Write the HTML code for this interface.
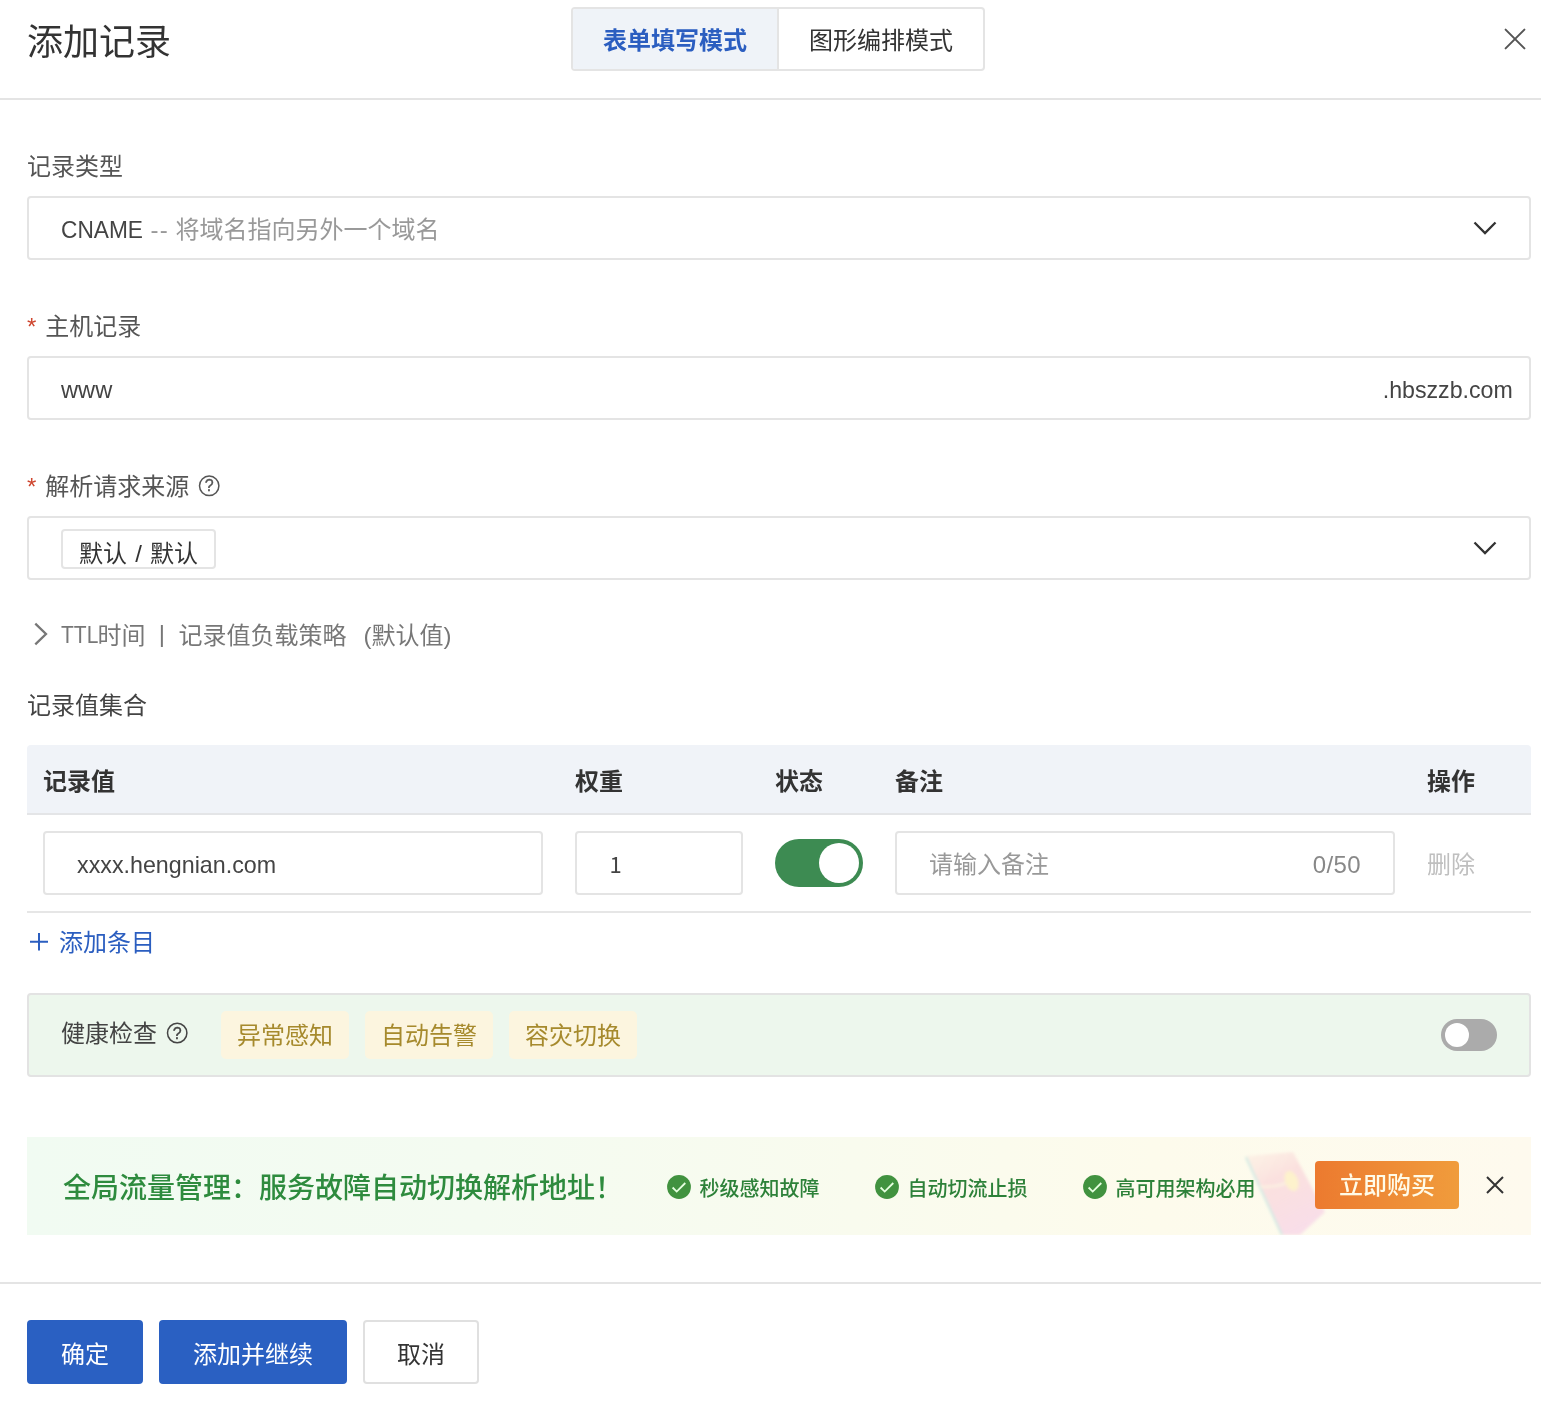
<!DOCTYPE html>
<html lang="zh-CN">
<head>
<meta charset="utf-8">
<title>添加记录</title>
<style>
*{box-sizing:border-box;margin:0;padding:0}
html,body{width:1541px;height:1402px;background:#fff;overflow:hidden}
body{position:relative;font-family:"Liberation Sans","Noto Sans CJK SC",sans-serif;font-size:24px;color:#333;line-height:1}
.abs{position:absolute;white-space:nowrap}
.hline{position:absolute;left:0;width:1541px;height:2px;background:#e4e4e4}
.title{left:27px;top:19px;font-size:36px;line-height:48px;color:#333}
.tabs{left:571px;top:7px;width:414px;height:64px;border:2px solid #e4e4e4;border-radius:4px;display:flex;background:#fff;overflow:hidden}
.tab{flex:1;display:flex;align-items:center;justify-content:center;font-size:24px;color:#333;padding-top:3px}
.tab.on{background:#eff3f8;color:#2b5ec0;font-weight:700;border-right:2px solid #e4e4e4}
.label{left:27px;font-size:24px;line-height:32px;color:#555}
.req{color:#cf462f;margin-right:9px}
.box{left:27px;width:1504px;height:64px;border:2px solid #e4e4e4;border-radius:4px;background:#fff}
.txt{font-size:24px;line-height:32px;color:#444}
.gray{color:#999}
.tag{left:61px;top:529px;width:155px;height:40px;border:2px solid #e4e4e4;border-radius:4px;font-size:24px;line-height:36px;text-align:center;color:#333;padding-top:5px;word-spacing:1.6px}
.th{top:766px;font-size:24px;line-height:32px;font-weight:700;color:#333}
.hc{top:1011px;width:128px;height:48px;border-radius:5px;background:#fcf5df;color:#a68a2d;font-size:24px;line-height:50px;text-align:center}
.banner{left:27px;top:1137px;width:1504px;height:98px;overflow:hidden;background:linear-gradient(90deg,#f1fbf2 0%,#f4fbf1 30%,#f9fbee 55%,#fdfbec 75%,#fefaee 100%)}
.bi{top:1177px;height:24px;display:flex;align-items:center;font-size:20px;color:#2d8139;font-weight:500}
.bi svg{position:relative;top:-2px}
.bi span{margin-left:8.5px;letter-spacing:0}
.buy{left:1315px;top:1161px;width:144px;height:48px;border-radius:4px;background:linear-gradient(90deg,#ec7a2f,#f09c3c);color:#fffbe8;font-size:24px;line-height:48px;text-align:center;font-weight:500;padding-top:1px}
.btn{top:1320px;height:64px;border-radius:4px;font-size:24px;line-height:62px;text-align:center;border:2px solid #e0e0e0;color:#333;background:#fff;padding-top:2px}
.btn.pri{background:#2a60c2;border-color:#2a60c2;color:#fff}
</style>
</head>
<body>
<div style="position:absolute;left:0;top:0;width:1541px;height:1402px;will-change:transform">

<!-- header -->
<div class="abs title">添加记录</div>
<div class="abs tabs"><div class="tab on">表单填写模式</div><div class="tab">图形编排模式</div></div>
<svg class="abs" style="left:1503px;top:27px" width="24" height="24" viewBox="0 0 24 24"><path d="M2.6 2.6 L21.4 21.4 M21.4 2.6 L2.6 21.4" stroke="#555" stroke-width="2" stroke-linecap="round" fill="none"/></svg>
<div class="hline" style="top:98px"></div>

<!-- record type -->
<div class="abs label" style="top:151px">记录类型</div>
<div class="abs box" style="top:196px"></div>
<div class="abs txt" style="left:61px;top:214px"><span style="display:inline-block;transform:scaleX(0.945);transform-origin:0 50%;margin-right:-3.4px;margin-left:-0.5px">CNAME</span> <span class="gray"><span style="letter-spacing:1.2px">--</span> 将域名指向另外一个域名</span></div>
<svg class="abs" style="left:1472px;top:218px" width="26" height="20" viewBox="0 0 26 20"><path d="M2.5 4.5 L13 15 L23.5 4.5" stroke="#333" stroke-width="2.3" fill="none"/></svg>

<!-- host record -->
<div class="abs label" style="top:311px"><span class="req">*</span>主机记录</div>
<div class="abs box" style="top:356px"></div>
<div class="abs txt" style="left:61px;top:374px;transform:scaleX(0.985);transform-origin:0 50%">www</div>
<div class="abs txt" style="right:28px;top:374px;transform:scaleX(0.965);transform-origin:100% 50%">.hbszzb.com</div>

<!-- source -->
<div class="abs label" style="top:471px"><span class="req">*</span>解析请求来源</div>
<svg class="abs" style="left:197px;top:474px" width="24" height="24" viewBox="0 0 24 24"><circle cx="12.2" cy="11.8" r="9.7" stroke="#555" stroke-width="1.5" fill="none"/><text x="12.2" y="17.4" font-size="16" text-anchor="middle" fill="#555" font-family="Liberation Sans, sans-serif" stroke-width="0.35" stroke="#555">?</text></svg>
<div class="abs box" style="top:516px"></div>
<div class="abs tag">默认 / 默认</div>
<svg class="abs" style="left:1472px;top:538px" width="26" height="20" viewBox="0 0 26 20"><path d="M2.5 4.5 L13 15 L23.5 4.5" stroke="#333" stroke-width="2.3" fill="none"/></svg>

<!-- TTL -->
<svg class="abs" style="left:30px;top:620px" width="20" height="28" viewBox="0 0 20 28"><path d="M5.3 3.6 L16 14 L5.3 24.4" stroke="#777" stroke-width="2.3" fill="none"/></svg>
<div class="abs txt" style="left:61px;top:620px;color:#777"><span style="display:inline-block;transform:scaleX(0.875);transform-origin:0 50%;margin-right:-6.2px;position:relative;top:-1px">TTL</span>时间<span style="display:inline-block;width:33px;text-align:center;font-size:24px;line-height:32px;position:relative;top:-2px">|</span>记录值负载策略<span style="margin-left:17px">(默认值)</span></div>

<!-- record values -->
<div class="abs label" style="top:690px;color:#444">记录值集合</div>
<div class="abs" style="left:27px;top:745px;width:1504px;height:68px;background:#f0f3f8;border-radius:4px 4px 0 0"></div>
<div class="abs" style="left:27px;top:813px;width:1504px;height:2px;background:#e4e5e7"></div>
<div class="abs" style="left:27px;top:911px;width:1504px;height:2px;background:#e6e6e6"></div>
<div class="abs th" style="left:43px">记录值</div>
<div class="abs th" style="left:575px">权重</div>
<div class="abs th" style="left:775px">状态</div>
<div class="abs th" style="left:895px">备注</div>
<div class="abs th" style="left:1427px">操作</div>

<div class="abs box" style="left:43px;top:831px;width:500px"></div>
<div class="abs txt" style="left:77px;top:849px;transform:scaleX(0.969);transform-origin:0 50%">xxxx.hengnian.com</div>
<div class="abs box" style="left:575px;top:831px;width:168px"></div>
<div class="abs txt" style="left:609.5px;top:846.5px;font-family:'Noto Sans CJK SC',sans-serif;font-size:22px">1</div>
<div class="abs" style="left:775px;top:839px;width:88px;height:48px;border-radius:24px;background:#3d8b52"></div>
<div class="abs" style="left:819px;top:843px;width:40px;height:40px;border-radius:20px;background:#fff"></div>
<div class="abs box" style="left:895px;top:831px;width:500px"></div>
<div class="abs txt gray" style="left:929px;top:849px">请输入备注</div>
<div class="abs txt" style="right:180px;top:849px;color:#888;letter-spacing:0.4px">0/50</div>
<div class="abs txt" style="left:1427px;top:849px;color:#bfbfbf">删除</div>

<!-- add item -->
<svg class="abs" style="left:30px;top:933px" width="18" height="18" viewBox="0 0 18 18"><path d="M9 0 V17.5 M0 8.8 H18" stroke="#2b5ec0" stroke-width="2" fill="none"/></svg>
<div class="abs txt" style="left:59px;top:927px;color:#2b5ec0">添加条目</div>

<!-- health check -->
<div class="abs" style="left:27px;top:993px;width:1504px;height:84px;background:#edf7ed;border:2px solid #e3e3e3;border-radius:4px"></div>
<div class="abs txt" style="left:61px;top:1018px">健康检查</div>
<svg class="abs" style="left:165px;top:1021px" width="24" height="24" viewBox="0 0 24 24"><circle cx="12.2" cy="12" r="9.7" stroke="#444" stroke-width="1.5" fill="none"/><text x="12.2" y="17.6" font-size="16" text-anchor="middle" fill="#444" font-family="Liberation Sans, sans-serif" stroke-width="0.35" stroke="#444">?</text></svg>
<div class="abs hc" style="left:221px">异常感知</div>
<div class="abs hc" style="left:365px">自动告警</div>
<div class="abs hc" style="left:509px">容灾切换</div>
<div class="abs" style="left:1441px;top:1019px;width:56px;height:32px;border-radius:16px;background:#ababab"></div>
<div class="abs" style="left:1445px;top:1023px;width:24px;height:24px;border-radius:12px;background:#fff"></div>

<!-- banner -->
<div class="abs banner">
<svg style="position:absolute;left:1200px;top:0" width="160" height="98" viewBox="0 0 160 98">
<defs><linearGradient id="env" x1="0" y1="0" x2="0.5" y2="1"><stop offset="0" stop-color="#fcebe0" stop-opacity="0.55"/><stop offset="0.4" stop-color="#fadcdc" stop-opacity="0.9"/><stop offset="1" stop-color="#f8dce8"/></linearGradient>
<filter id="bl" x="-20%" y="-20%" width="140%" height="140%"><feGaussianBlur stdDeviation="1.6"/></filter></defs>
<g filter="url(#bl)"><path d="M20 19 L66 15 L98 75 L73 98 L56 98 Z" fill="url(#env)" opacity="0.95"/>
<path d="M19 20 L55 98" stroke="#cfe8e3" stroke-width="2" fill="none"/>
<path d="M33 49.5 Q48 51 62 45" stroke="#fcf3e2" stroke-width="2.2" fill="none"/>
<ellipse cx="64.5" cy="44" rx="6.5" ry="10.5" transform="rotate(-22 64.5 44)" fill="#fdf2cc"/></g>
</svg>
</div>
<div class="abs" style="left:63px;top:1169px;font-size:28px;line-height:40px;font-weight:500;color:#2e8b3e">全局流量管理：服务故障自动切换解析地址！</div>
<div class="abs bi" style="left:667px"><svg width="24" height="24" viewBox="0 0 24 24"><circle cx="12" cy="12" r="11.9" fill="#41923f"/><path d="M5.6 12.5 L9.7 16.6 L18.3 8" stroke="#e6ffe0" stroke-width="1.8" fill="none"/></svg><span>秒级感知故障</span></div>
<div class="abs bi" style="left:875px"><svg width="24" height="24" viewBox="0 0 24 24"><circle cx="12" cy="12" r="11.9" fill="#41923f"/><path d="M5.6 12.5 L9.7 16.6 L18.3 8" stroke="#e6ffe0" stroke-width="1.8" fill="none"/></svg><span>自动切流止损</span></div>
<div class="abs bi" style="left:1083px"><svg width="24" height="24" viewBox="0 0 24 24"><circle cx="12" cy="12" r="11.9" fill="#41923f"/><path d="M5.6 12.5 L9.7 16.6 L18.3 8" stroke="#e6ffe0" stroke-width="1.8" fill="none"/></svg><span>高可用架构必用</span></div>
<div class="abs buy">立即购买</div>
<svg class="abs" style="left:1485px;top:1175px" width="20" height="20" viewBox="0 0 20 20"><path d="M2 2 L18 18 M18 2 L2 18" stroke="#333" stroke-width="2" fill="none"/></svg>

<!-- footer -->
<div class="hline" style="top:1282px"></div>
<div class="abs btn pri" style="left:27px;width:116px">确定</div>
<div class="abs btn pri" style="left:159px;width:188px">添加并继续</div>
<div class="abs btn" style="left:363px;width:116px">取消</div>
</div>
</body>
</html>
